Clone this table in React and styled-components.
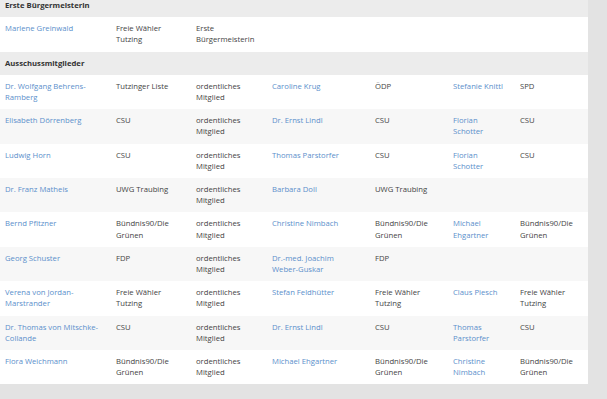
import React from "react";
import styled, { createGlobalStyle } from "styled-components";

const Global = createGlobalStyle`
  html, body { margin: 0; padding: 0; background: #e3e3e3; overflow: hidden; }
  body { font-family: "Open Sans", "Liberation Sans", sans-serif; font-size: 7.7px; line-height: 11.2px; color: #444; }
`;

const Page = styled.div`
  width: 607px;
  height: 399px;
  overflow: hidden;
  margin-top: -6px;
`;

const Table = styled.table`
  width: 588px;
  table-layout: fixed;
  border-collapse: collapse;
  border-spacing: 0;
  background: #fff;
`;

const HeadCell = styled.th`
  background: #ececec;
  text-align: left;
  font-weight: 700;
  color: #333;
  padding: 6px 5px;
`;

const Row = styled.tr`
  background: ${(p) => (p.$striped ? "#f7f7f7" : "#fff")};
`;

const Cell = styled.td`
  vertical-align: top;
  padding: 6px 5px;
  white-space: pre-line;
  color: ${(p) => (p.$link ? "#5b8fcb" : "#444")};
`;

const Footer = styled.div`
  display: flex;
  justify-content: space-between;
  width: 600px;
  padding-top: 9px;
  color: #555;
`;

const FootRight = styled.div`
  display: flex;
  gap: 9px;
  padding-right: 6px;
`;

const FootLink = styled.span`
  color: ${(p) => (p.$dark ? "#555" : "#5b8fcb")};
`;

const widths = [111, 80, 76, 103, 78, 67, 73];
const linkCols = [0, 3, 5];
const ROLE = "ordentliches\nMitglied";
const BG = "Bündnis90/Die\nGrünen";
const FW = "Freie Wähler\nTutzing";

const sections = [
  {
    title: "Erste Bürgermeisterin",
    rows: [["Marlene Greinwald", FW, "Erste\nBürgermeisterin", "", "", "", ""]],
  },
  {
    title: "Ausschussmitglieder",
    rows: [
      ["Dr. Wolfgang Behrens-\nRamberg", "Tutzinger Liste", ROLE, "Caroline Krug", "ÖDP", "Stefanie Knittl", "SPD"],
      ["Elisabeth Dörrenberg", "CSU", ROLE, "Dr. Ernst Lindl", "CSU", "Florian\nSchotter", "CSU"],
      ["Ludwig Horn", "CSU", ROLE, "Thomas Parstorfer", "CSU", "Florian\nSchotter", "CSU"],
      ["Dr. Franz Matheis", "UWG Traubing", ROLE, "Barbara Doll", "UWG Traubing", "", ""],
      ["Bernd Pfitzner", BG, ROLE, "Christine Nimbach", BG, "Michael\nEhgartner", BG],
      ["Georg Schuster", "FDP", ROLE, "Dr.-med. Joachim\nWeber-Guskar", "FDP", "", ""],
      ["Verena von Jordan-\nMarstrander", FW, ROLE, "Stefan Feldhütter", FW, "Claus Piesch", FW],
      ["Dr. Thomas von Mitschke-\nCollande", "CSU", ROLE, "Dr. Ernst Lindl", "CSU", "Thomas\nParstorfer", "CSU"],
      ["Flora Weichmann", BG, ROLE, "Michael Ehgartner", BG, "Christine\nNimbach", BG],
    ],
  },
];

export default function App() {
  return (
    <>
      <Global />
      <Page>
        <Table>
          <colgroup>
            {widths.map((w, i) => (
              <col key={i} style={{ width: w }} />
            ))}
          </colgroup>
          {sections.map((s) => (
            <tbody key={s.title}>
              <tr>
                <HeadCell colSpan={7}>{s.title}</HeadCell>
              </tr>
              {s.rows.map((r, ri) => (
                <Row key={ri} $striped={ri % 2 === 1}>
                  {r.map((c, ci) => (
                    <Cell key={ci} $link={linkCols.includes(ci)}>
                      {c}
                    </Cell>
                  ))}
                </Row>
              ))}
            </tbody>
          ))}
        </Table>
        <Footer>
          <span>Letzte Änderung: 10.03.2021 15:10:26</span>
          <FootRight>
            <FootLink $dark>Seite:</FootLink>
            <FootLink>Drucken</FootLink>
            <FootLink>Mail</FootLink>
            <FootLink>Teilen</FootLink>
          </FootRight>
        </Footer>
      </Page>
    </>
  );
}
